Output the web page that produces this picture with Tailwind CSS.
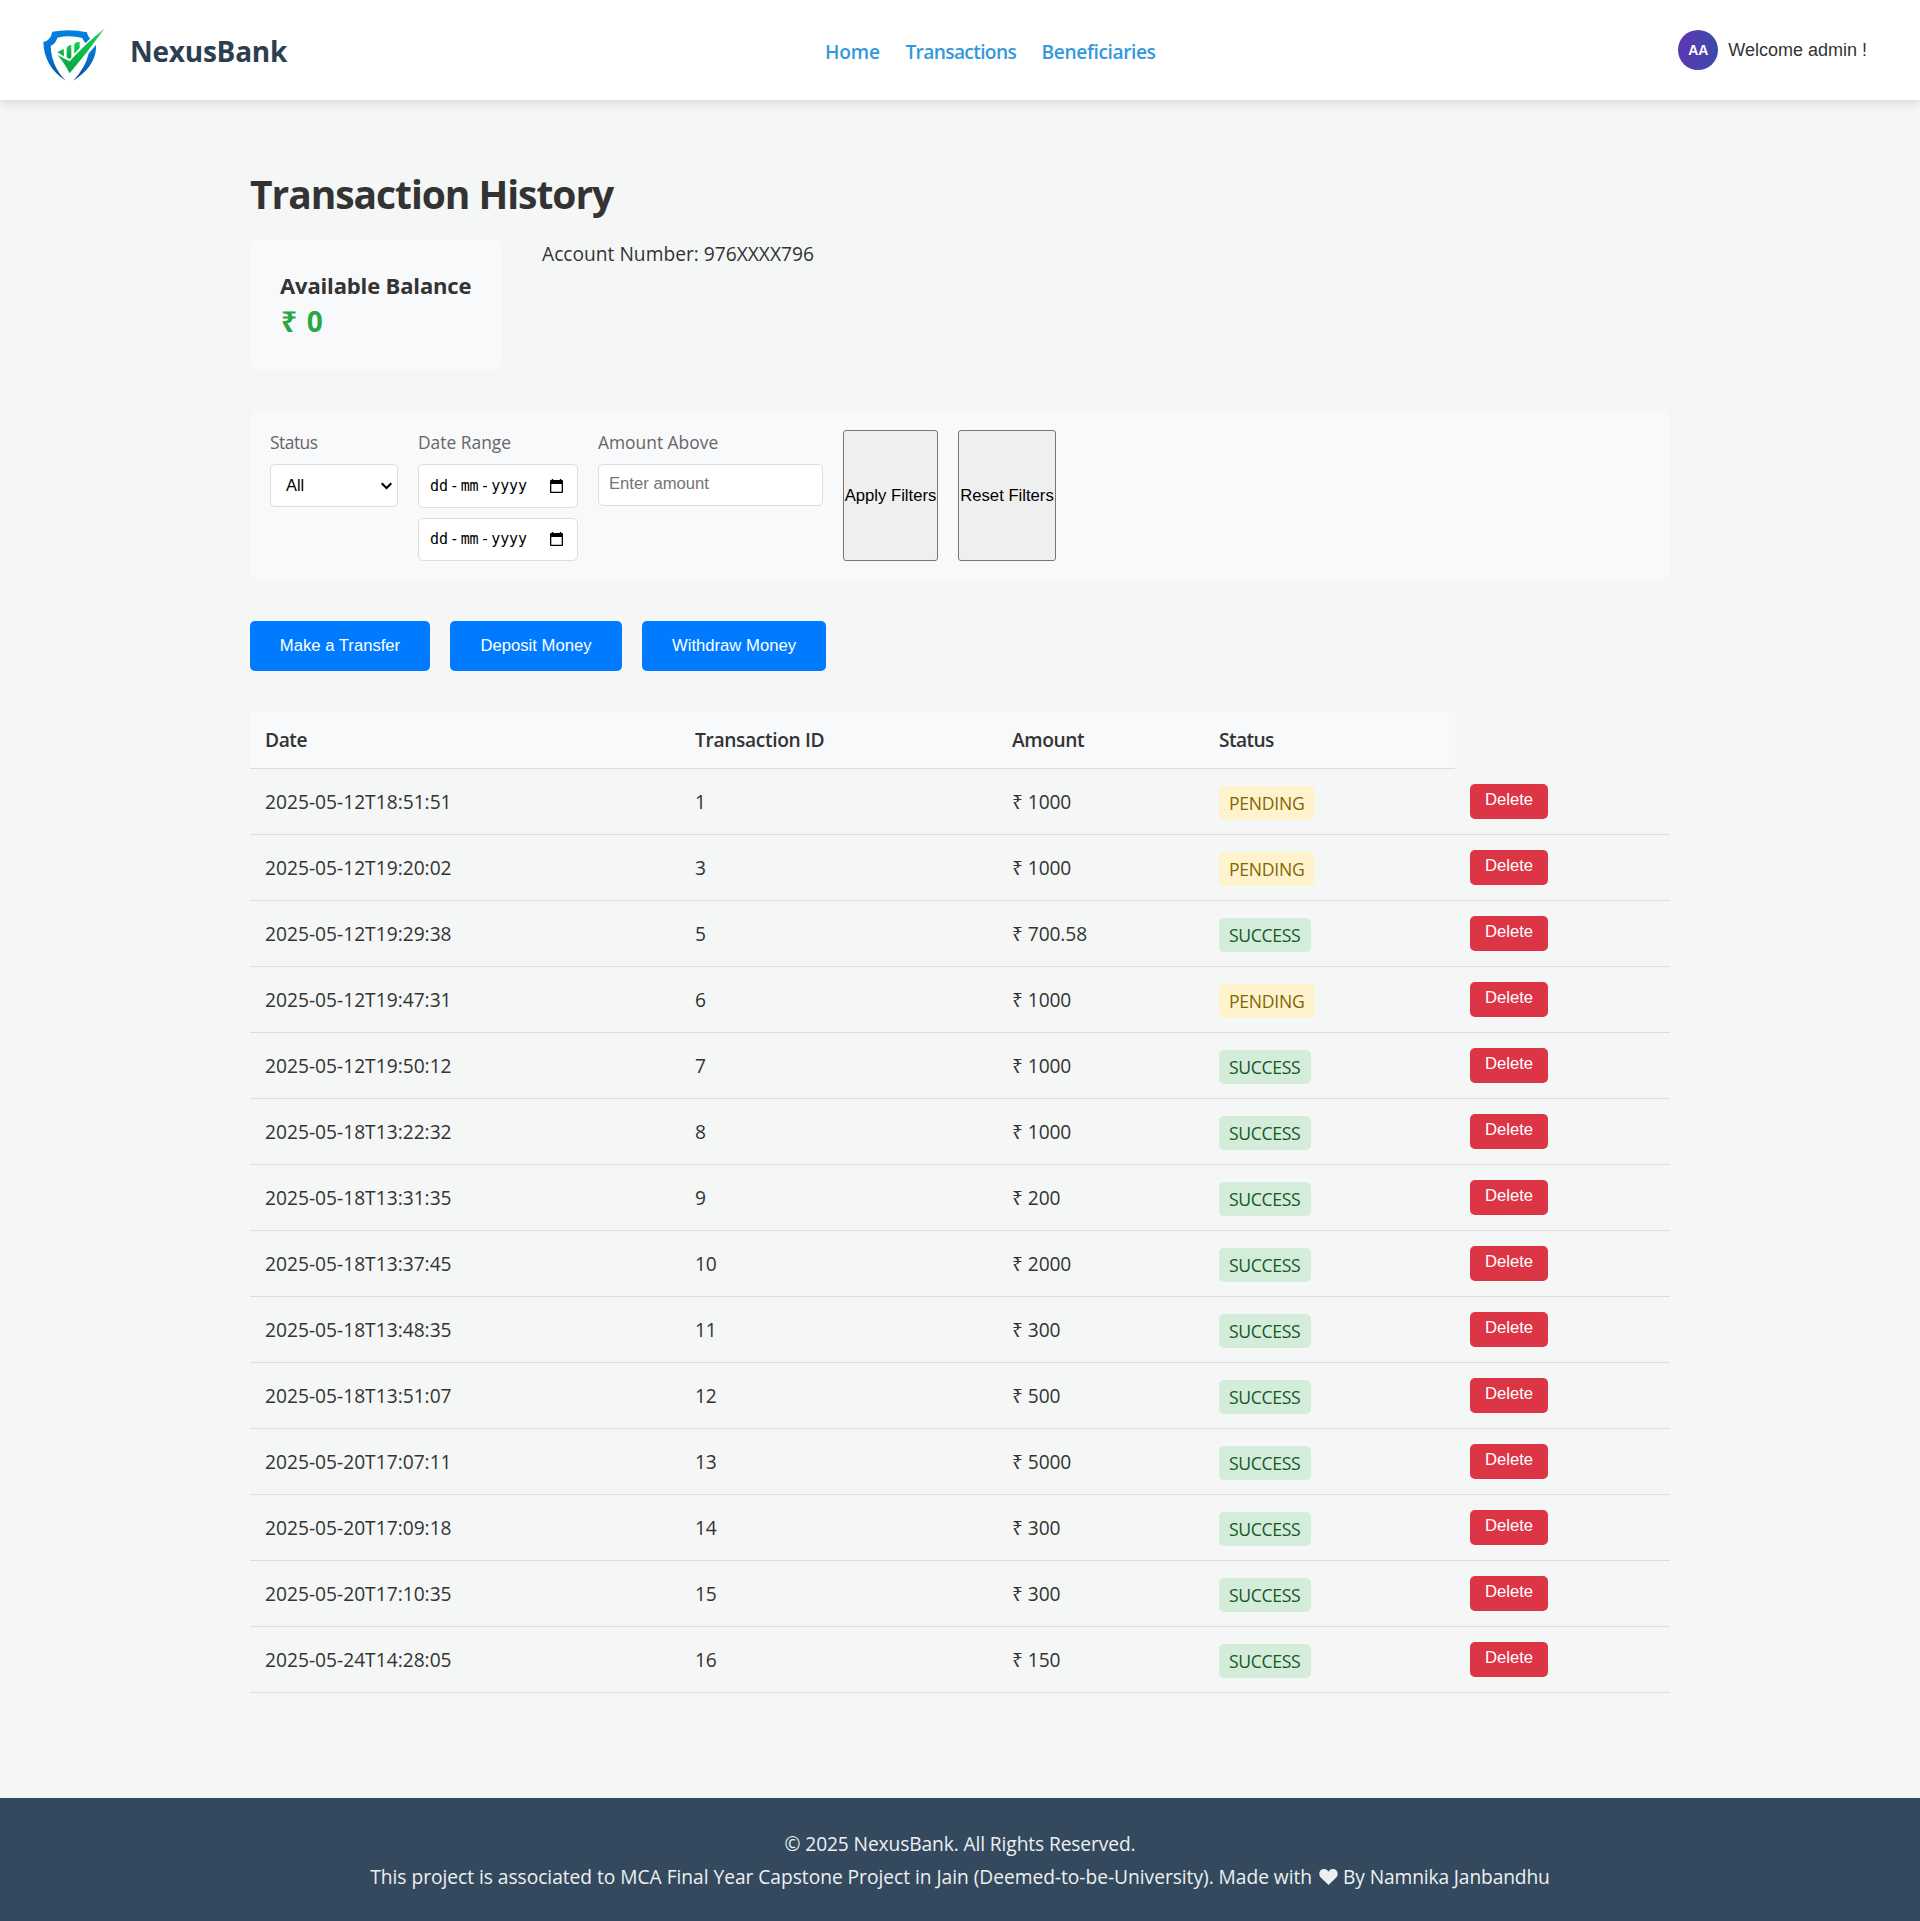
<!DOCTYPE html>
<html lang="en">
<head>
<meta charset="utf-8">
<title>NexusBank - Transaction History</title>
<script src="https://cdn.jsdelivr.net/npm/@tailwindcss/browser@4"></script>
</head>
<body class="min-h-screen flex flex-col bg-[#f4f7f6] text-[#333] font-['Open_Sans','Noto_Sans',sans-serif] text-[19.2px]">

<header class="relative h-[100px] shrink-0 flex items-center bg-white shadow-[0_2px_10px_rgba(0,0,0,0.15)] pl-[35px] pr-[53px]">
  <div class="w-[790px] flex items-center">
    <svg class="w-[75px] h-[70px] mt-[10px]" viewBox="0 0 225 210">
      <defs>
        <linearGradient id="blue" x1="0" y1="0" x2="0" y2="1"><stop offset="0" stop-color="#0280e0"/><stop offset=".55" stop-color="#0a6fcf"/><stop offset="1" stop-color="#0a4f9e"/></linearGradient>
        <linearGradient id="green" x1="0" y1="0" x2="0" y2="1"><stop offset="0" stop-color="#12d45c"/><stop offset="1" stop-color="#06a440"/></linearGradient>
      </defs>
      <path fill="url(#blue)" d="M52 35Q105 25 156 37Q158 58 183 66L183 88Q178 142 115 182Q152 140 160 104L164 78Q146 68 142 54Q104 44 67 53Q63 70 47 77Q49 138 92 182Q27 140 25 66Q46 62 52 35Z"/>
      <path fill="#fff" d="M214 16L178 44Q148 70 104 122L104 136L130 136L205 50Z"/>
      <path fill="url(#green)" d="M208 26Q158 96 104 160Q88 128 67 105L104 124Q150 72 208 26Z"/>
      <path fill="url(#green)" d="M67 97L86 86L87 109ZM95 112V84Q99 75 109 75V112L104 117ZM118 101V72Q122 65 134 65V84Z"/>
    </svg>
    <span class="ml-5 mt-[2px] text-[28px] leading-10 font-bold tracking-[-0.24px] text-[#2c3e50]">NexusBank</span>
  </div>
  <nav class="flex gap-[25.5px] mt-[3px] leading-[30px] font-semibold text-[#3498db]">
    <a class="tracking-[-0.15px]">Home</a>
    <a class="tracking-[-0.66px]">Transactions</a>
    <a class="tracking-[-0.41px]">Beneficiaries</a>
  </nav>
  <div class="ml-auto flex items-center gap-[10px] font-['Liberation_Sans',sans-serif]">
    <div class="size-10 rounded-full bg-linear-to-r from-[#5e35b1] to-[#3949ab] flex items-center justify-center text-sm font-bold text-white">AA</div>
    <span class="text-lg leading-6">Welcome admin !</span>
  </div>
</header>

<main class="w-[1420px] mx-auto pt-[67px] pb-[105px]">
  <h1 class="text-[39px] leading-[54px] font-bold tracking-[-1.06px]">Transaction History</h1>

  <section class="mt-[18px] flex gap-10">
    <div class="w-[252px] h-[131px] rounded-[10px] bg-[#f8f9fb] p-[30px]">
      <h2 class="text-[22px] leading-[33px] font-bold tracking-[-0.15px] whitespace-nowrap">Available Balance</h2>
      <p class="pl-px text-[28px] leading-[38px] font-bold tracking-[1.2px] text-[#28a745]">₹ 0</p>
    </div>
    <p class="leading-[29px]">Account Number: 976XXXX796</p>
  </section>

  <section class="mt-10 h-[171px] rounded-[10px] bg-[#f8f9fb] p-5 flex gap-5 font-['Liberation_Sans',sans-serif] text-[16.667px] text-black">
    <div class="w-32 flex flex-col gap-[9px]">
      <label class="font-['Open_Sans',sans-serif] text-[17.4px] leading-[25px] tracking-[-0.5px] text-[#666]">Status</label>
      <div class="h-[43px] rounded-[5px] border border-[#ddd] bg-white flex items-center justify-between pl-[15px] pr-[5px]">
        <span class="text-[16.4px]">All</span>
        <svg class="w-[11px] h-[8px] mt-px" viewBox="0 0 11 8" fill="none" stroke="#000" stroke-width="2"><path d="M0.7 1.2L5.5 6L10.3 1.2"/></svg>
      </div>
    </div>
    <div class="w-40 flex flex-col">
      <label class="mb-[9px] font-['Open_Sans',sans-serif] text-[17.4px] leading-[25px] text-[#666]">Date Range</label>
      <div class="h-11 rounded-[5px] border border-[#ddd] bg-white flex items-center justify-between pl-[11px] pr-[14px]">
        <span class="flex gap-[2px] font-['DejaVu_Sans_Mono',monospace] text-[15px] tracking-[-0.15px]"><span>dd</span><span>-</span><span>mm</span><span>-</span><span>yyyy</span></span>
        <svg class="w-[13px] h-[14px] -mt-px" viewBox="0 0 13 14"><path fill="#000" fill-rule="evenodd" d="M1.8 0H3.2V1H9.8V0H11.2V1H12Q13 1 13 2V13Q13 14 12 14H1Q0 14 0 13V2Q0 1 1 1H1.8ZM1.3 5V12.7H11.7V5Z"/></svg>
      </div>
      <div class="mt-[10px] h-[43px] rounded-[5px] border border-[#ddd] bg-white flex items-center justify-between pl-[11px] pr-[14px]">
        <span class="flex gap-[2px] font-['DejaVu_Sans_Mono',monospace] text-[15px] tracking-[-0.15px]"><span>dd</span><span>-</span><span>mm</span><span>-</span><span>yyyy</span></span>
        <svg class="w-[13px] h-[14px] -mt-px" viewBox="0 0 13 14"><path fill="#000" fill-rule="evenodd" d="M1.8 0H3.2V1H9.8V0H11.2V1H12Q13 1 13 2V13Q13 14 12 14H1Q0 14 0 13V2Q0 1 1 1H1.8ZM1.3 5V12.7H11.7V5Z"/></svg>
      </div>
    </div>
    <div class="w-[225px] flex flex-col gap-[9px]">
      <label class="font-['Open_Sans',sans-serif] text-[17.4px] leading-[25px] text-[#666]">Amount Above</label>
      <input class="h-[42px] rounded-[5px] border border-[#ddd] bg-white px-[10px] pb-[2px] placeholder:text-[#757575]" placeholder="Enter amount">
    </div>
    <button class="w-[95px] rounded-[3px] border border-[#767676] bg-[#efefef] whitespace-nowrap flex items-center justify-center">Apply Filters</button>
    <button class="w-[98px] rounded-[3px] border border-[#767676] bg-[#efefef] whitespace-nowrap flex items-center justify-center">Reset Filters</button>
  </section>

  <section class="mt-10 flex gap-5 font-['Liberation_Sans',sans-serif] text-[16.667px] text-white">
    <button class="w-[180px] h-[50px] pb-[2px] rounded-[5px] bg-[#007bff]">Make a Transfer</button>
    <button class="w-[172px] h-[50px] pb-[2px] rounded-[5px] bg-[#007bff]">Deposit Money</button>
    <button class="w-[184px] h-[50px] pb-[2px] rounded-[5px] bg-[#007bff]">Withdraw Money</button>
  </section>

  <table class="mt-10 w-[1420px] table-fixed border-separate border-spacing-0 text-left">
    <colgroup><col class="w-[430px]"><col class="w-[317px]"><col class="w-[207px]"><col class="w-[251px]"><col class="w-[215px]"></colgroup>
    <thead>
      <tr class="h-[58px]">
        <th class="px-[15px] pt-[2px] bg-[#f8f9fb] border-b border-[#ddd] font-semibold tracking-[-0.43px]">Date</th>
        <th class="px-[15px] pt-[2px] bg-[#f8f9fb] border-b border-[#ddd] font-semibold tracking-[-0.36px]">Transaction ID</th>
        <th class="px-[15px] pt-[2px] bg-[#f8f9fb] border-b border-[#ddd] font-semibold tracking-[-0.42px]">Amount</th>
        <th class="px-[15px] pt-[2px] bg-[#f8f9fb] border-b border-[#ddd] font-semibold tracking-[-0.6px]">Status</th>
      </tr>
    </thead>
    <tbody id="rows"></tbody>
  </table>
</main>

<footer class="mt-auto h-[123px] shrink-0 bg-[#34495e] text-[#ecf0f1] pt-[29px] text-center leading-[33px]">
  <p class="tracking-[-0.11px]">© 2025 NexusBank. All Rights Reserved.</p>
  <p class="flex justify-center items-center whitespace-nowrap tracking-[-0.03px]">This project is associated to MCA Final Year Capstone Project in Jain (Deemed-to-be-University). Made with
    <svg class="ml-[7px] mr-[5px] w-[19px] h-[16px]" viewBox="0 0 19 16"><path fill="currentColor" d="M9.5 16L1.8 8.6C-1.2 5.2.6 0 5 0C7 0 8.6 1 9.5 2.8C10.4 1 12 0 14 0C18.400 0 20.2 5.200 17.200 8.600Z"/></svg>
    <span class="tracking-[-0.13px]">By Namnika Janbandhu</span></p>
</footer>

<script>
const transactions = [
  ["2025-05-12T18:51:51", 1, "1000", "PENDING"],
  ["2025-05-12T19:20:02", 3, "1000", "PENDING"],
  ["2025-05-12T19:29:38", 5, "700.58", "SUCCESS"],
  ["2025-05-12T19:47:31", 6, "1000", "PENDING"],
  ["2025-05-12T19:50:12", 7, "1000", "SUCCESS"],
  ["2025-05-18T13:22:32", 8, "1000", "SUCCESS"],
  ["2025-05-18T13:31:35", 9, "200", "SUCCESS"],
  ["2025-05-18T13:37:45", 10, "2000", "SUCCESS"],
  ["2025-05-18T13:48:35", 11, "300", "SUCCESS"],
  ["2025-05-18T13:51:07", 12, "500", "SUCCESS"],
  ["2025-05-20T17:07:11", 13, "5000", "SUCCESS"],
  ["2025-05-20T17:09:18", 14, "300", "SUCCESS"],
  ["2025-05-20T17:10:35", 15, "300", "SUCCESS"],
  ["2025-05-24T14:28:05", 16, "150", "SUCCESS"]
];
const badge = {
  PENDING: "block w-[96px] h-[34px] mt-[1px] pl-[10px] rounded-[5px] text-[17.6px] leading-[34px] tracking-[-0.26px] bg-[#fff3cd] text-[#856404]",
  SUCCESS: "block w-[92px] h-[34px] mt-[1px] pl-[10px] rounded-[5px] text-[17.6px] leading-[34px] tracking-[-0.34px] bg-[#d4edda] text-[#155724]"
};
document.getElementById("rows").innerHTML = transactions.map(([date, id, amount, status]) => `
  <tr class="h-[66px]">
    <td class="px-[15px] pt-[2px] border-b border-[#ddd]">${date}</td>
    <td class="px-[15px] pt-[2px] border-b border-[#ddd] tracking-[-0.2px]">${id}</td>
    <td class="px-[15px] pt-[2px] border-b border-[#ddd] tracking-[-0.1px]">₹ ${amount}</td>
    <td class="px-[15px] pt-[1px] border-b border-[#ddd]"><span class="${badge[status]}">${status}</span></td>
    <td class="px-[15px] border-b border-[#ddd]"><button class="block w-[78px] h-[35px] pb-[3px] rounded-[5px] bg-[#dc3545] text-white font-['Liberation_Sans',sans-serif] text-[16.667px] leading-[32px]">Delete</button></td>
  </tr>`).join("");
</script>
</body>
</html>
